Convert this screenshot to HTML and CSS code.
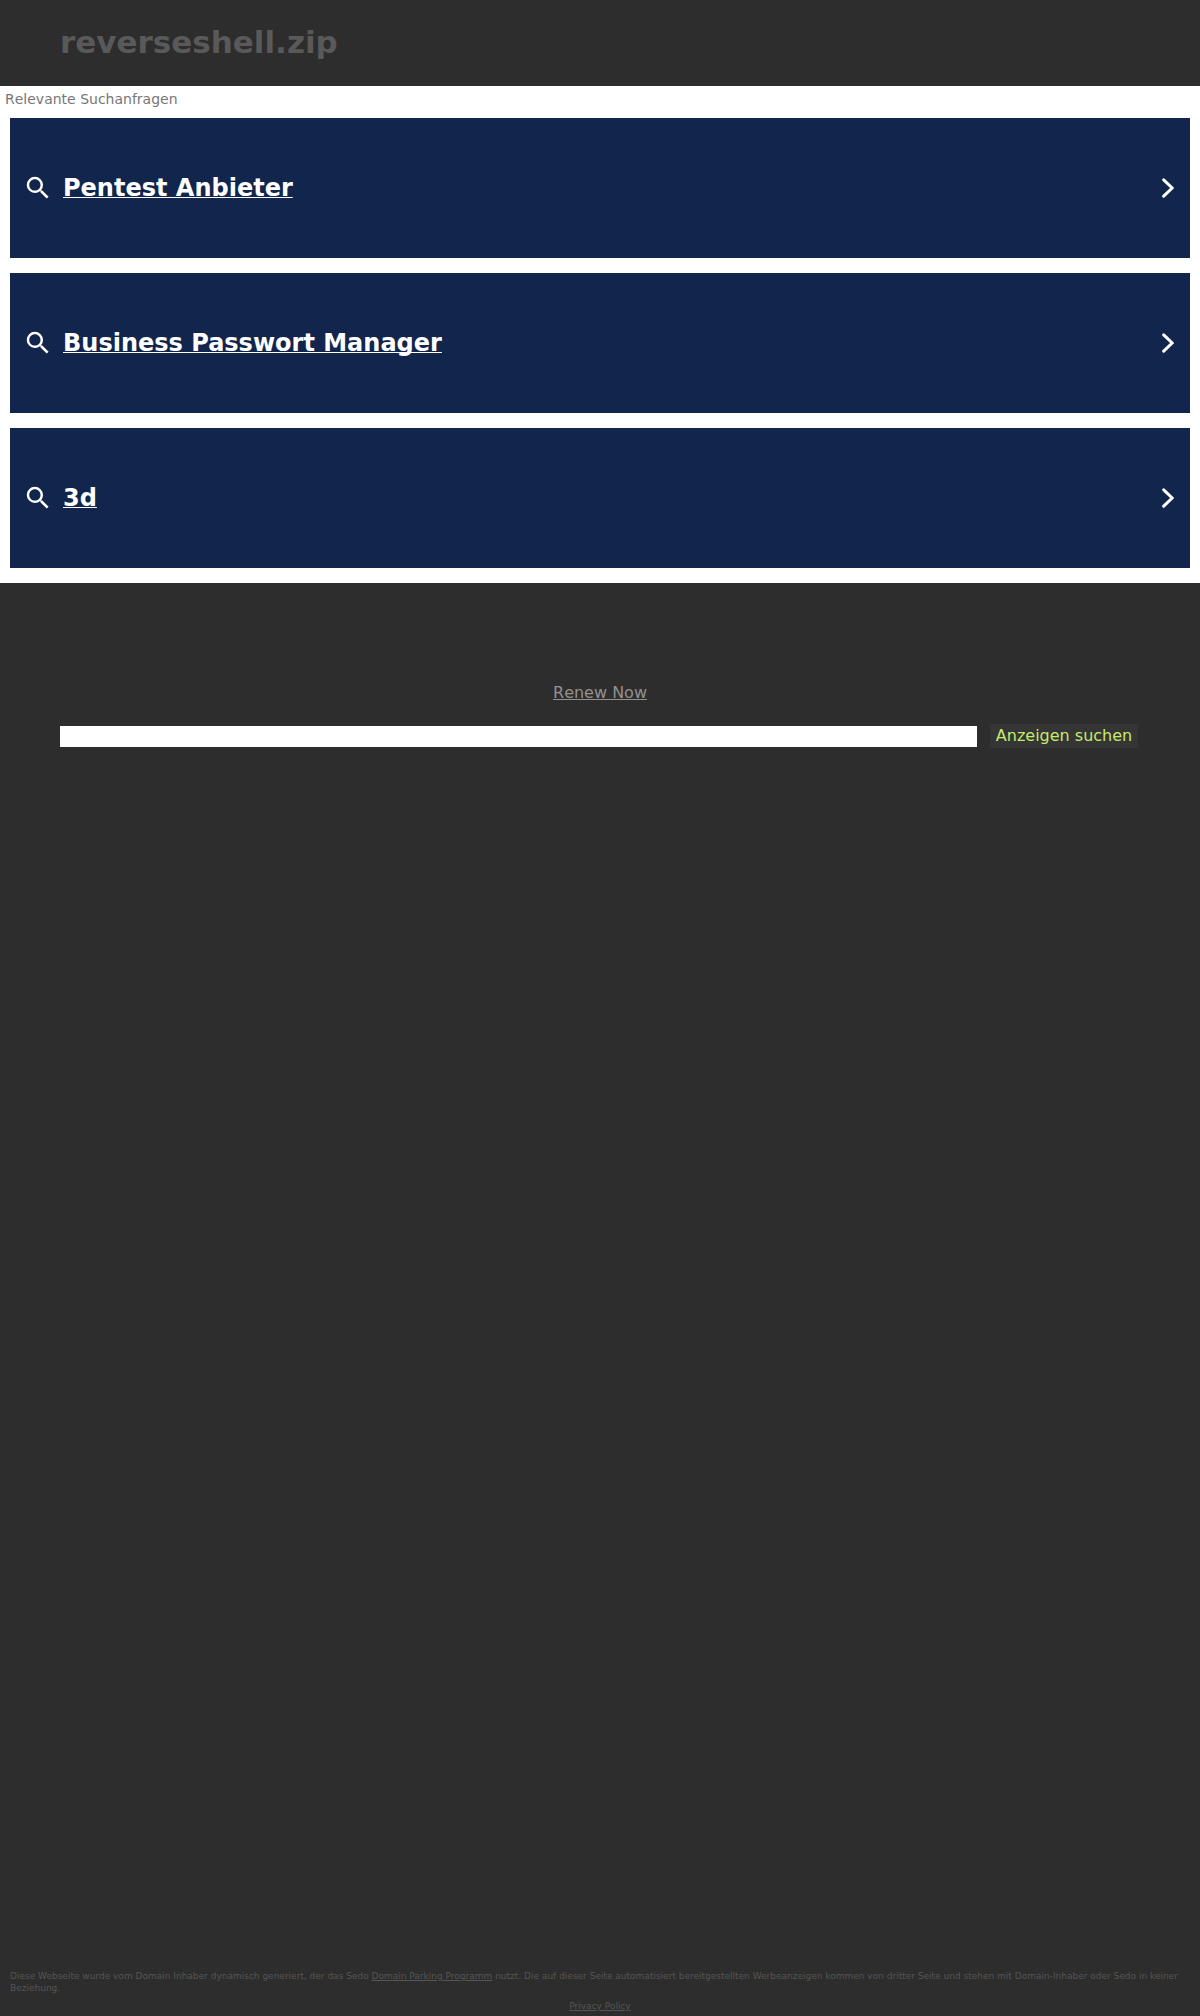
FILE: index.html
```html
<!DOCTYPE html>
<html lang="de">
<head>
<meta charset="utf-8">
<title>reverseshell.zip</title>
<link rel="stylesheet" href="styles.css">
</head>
<body>
<header class="header"><h1 class="domain">reverseshell.zip</h1></header>
<main class="main">
<section class="related">
<p class="related-title">Relevante Suchanfragen</p>
<a class="result" href="#">
<svg class="search-icon" viewBox="0 0 24 24"><path d="M15.5 14h-.79l-.28-.27A6.47 6.47 0 0 0 16 9.5 6.5 6.5 0 1 0 9.5 16c1.61 0 3.09-.59 4.23-1.57l.27.28v.79l5 4.99L20.49 19l-4.99-5zm-6 0C7.01 14 5 11.99 5 9.5S7.01 5 9.5 5 14 7.01 14 9.5 11.99 14 9.5 14z"/></svg>
<span class="result-text">Pentest Anbieter</span>
<svg class="chevron" viewBox="0 0 12 20"><path d="M1.7 1.8 10.2 10l-8.5 8.2"/></svg>
</a>
<a class="result" href="#">
<svg class="search-icon" viewBox="0 0 24 24"><path d="M15.5 14h-.79l-.28-.27A6.47 6.47 0 0 0 16 9.5 6.5 6.5 0 1 0 9.5 16c1.61 0 3.09-.59 4.23-1.57l.27.28v.79l5 4.99L20.49 19l-4.99-5zm-6 0C7.01 14 5 11.99 5 9.5S7.01 5 9.5 5 14 7.01 14 9.5 11.99 14 9.5 14z"/></svg>
<span class="result-text">Business Passwort Manager</span>
<svg class="chevron" viewBox="0 0 12 20"><path d="M1.7 1.8 10.2 10l-8.5 8.2"/></svg>
</a>
<a class="result" href="#">
<svg class="search-icon" viewBox="0 0 24 24"><path d="M15.5 14h-.79l-.28-.27A6.47 6.47 0 0 0 16 9.5 6.5 6.5 0 1 0 9.5 16c1.61 0 3.09-.59 4.23-1.57l.27.28v.79l5 4.99L20.49 19l-4.99-5zm-6 0C7.01 14 5 11.99 5 9.5S7.01 5 9.5 5 14 7.01 14 9.5 11.99 14 9.5 14z"/></svg>
<span class="result-text">3d</span>
<svg class="chevron" viewBox="0 0 12 20"><path d="M1.7 1.8 10.2 10l-8.5 8.2"/></svg>
</a>
</section>
<div class="renew"><a href="#">Renew Now</a></div>
<form class="search">
<input class="search-input" type="text" aria-label="Suche">
<button class="search-button" type="button">Anzeigen suchen</button>
</form>
</main>
<footer class="footer">
<p class="disclaimer">Diese Webseite wurde vom Domain Inhaber dynamisch generiert, der das Sedo <a href="#">Domain Parking Programm</a> nutzt. Die auf dieser Seite automatisiert bereitgestellten Werbeanzeigen kommen von dritter Seite und stehen mit Domain-Inhaber oder Sedo in keiner Beziehung.</p>
<p class="privacy"><a href="#">Privacy Policy</a></p>
</footer>
</body>
</html>
```
FILE: styles.css
```css
* { box-sizing: border-box; }
body {
  margin: 0;
  min-height: 2016px;
  display: flex;
  flex-direction: column;
  background: #2d2d2d;
  font: 16px/19px "DejaVu Sans", sans-serif;
  font-kerning: none;
}
.header {
  height: 86px;
  padding: 24px 60px;
}
.domain {
  margin: 0;
  color: #595959;
  font-size: 31px;
  line-height: 37px;
}
.main { flex: 1; }
.related {
  height: 497px;
  padding: 4px 10px 15px;
  background: #fff;
}
.related-title {
  height: 28px;
  margin: 0 0 0 -5px;
  color: #777;
  font-size: 14px;
  line-height: 18px;
}
.result {
  display: flex;
  align-items: center;
  height: 140px;
  margin-bottom: 15px;
  padding: 0 16px 0 13px;
  background: #12254c;
  color: #fff;
  font-size: 24px;
  font-weight: bold;
  font-kerning: normal;
  line-height: 28px;
  text-decoration: none;
}
.search-icon {
  width: 30px;
  height: 30px;
  margin-right: 10px;
  fill: #fff;
}
.result-text {
  flex: 1;
  text-decoration: underline;
  text-decoration-thickness: 1px;
  text-decoration-skip-ink: none;
  text-underline-offset: 1px;
}
.chevron {
  width: 12px;
  height: 20px;
  fill: none;
  stroke: #fff;
  stroke-width: 3;
  stroke-linecap: round;
}
.renew {
  margin-top: 100px;
  text-align: center;
}
.renew a {
  color: #949090;
  text-underline-offset: 1px;
}
.search {
  display: flex;
  align-items: center;
  gap: 13px;
  height: 24px;
  margin: 22px 62px 0 60px;
}
.search-input {
  flex: 1;
  height: 21px;
  margin-top: 1px;
  padding: 0 4px;
  border: 0;
  background: #fff;
  font: inherit;
}
.search-button {
  width: 148px;
  height: 24px;
  padding: 0 0 1px;
  border: 0;
  background: #353535;
  color: #c5ea6c;
  font: inherit;
}
.footer {
  padding: 0 10px 4px;
  color: #555;
  font-size: 9px;
  font-kerning: normal;
  line-height: 12px;
}
.footer p { margin: 0; }
.footer a { color: inherit; }
.footer .privacy {
  margin-top: 6px;
  text-align: center;
}
```
